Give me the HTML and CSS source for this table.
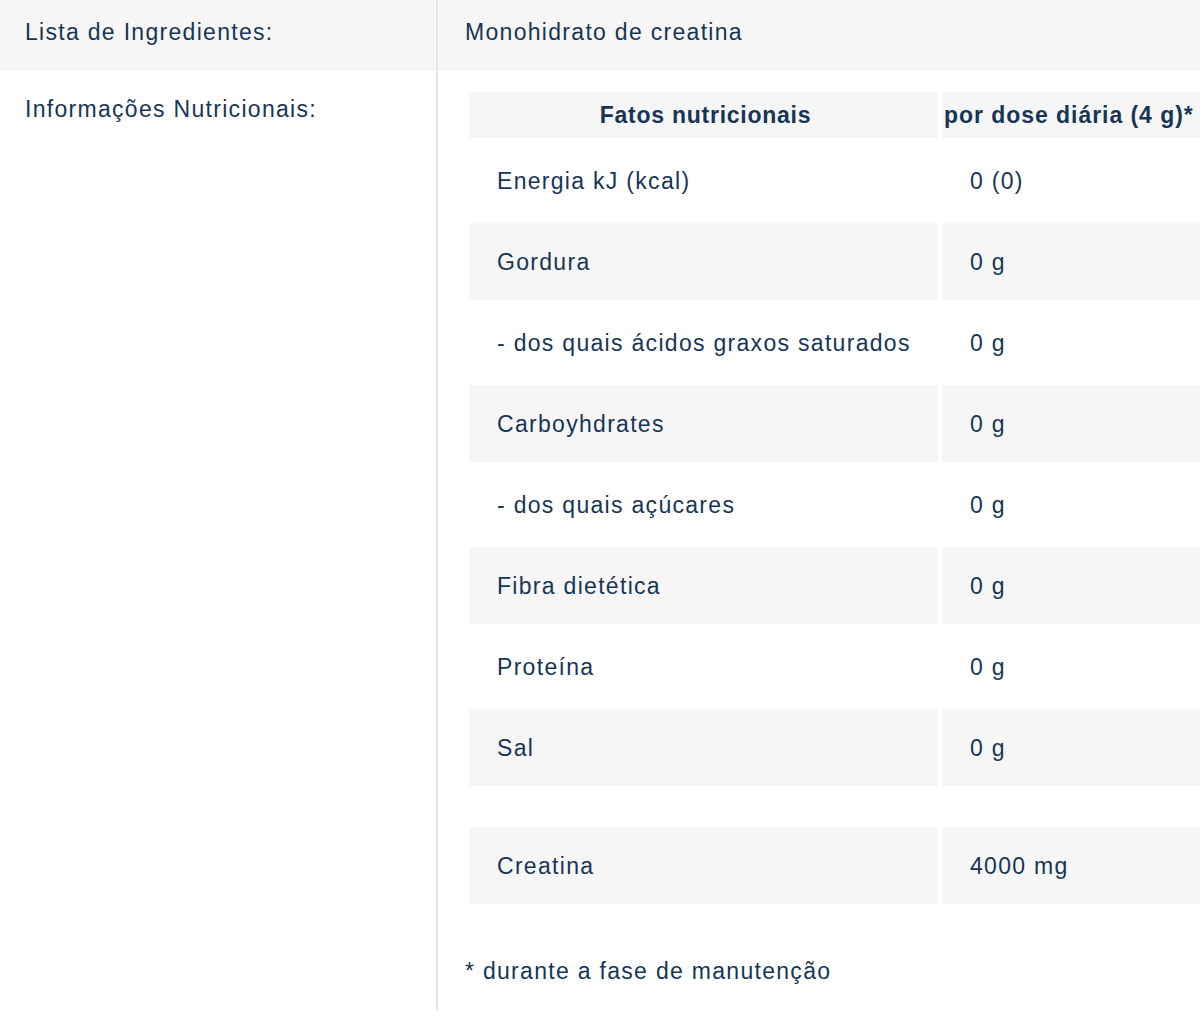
FILE: index.html
```html
<!DOCTYPE html>
<html lang="pt">
<head>
<meta charset="utf-8">
<title>Especificações</title>
<link rel="stylesheet" href="styles.css">
</head>
<body>
<div class="specs">
  <div class="spec-row spec-row--shaded">
    <div class="spec-label">Lista de Ingredientes:</div>
    <div class="spec-value">Monohidrato de creatina</div>
  </div>
  <div class="spec-row">
    <div class="spec-label spec-label--tall">Informações Nutricionais:</div>
    <div class="spec-value spec-value--table">
      <table class="nutri">
        <colgroup><col class="nutri-col-name"><col class="nutri-col-val"></colgroup>
        <thead>
          <tr><th>Fatos nutricionais</th><th>por dose diária (4 g)*</th></tr>
        </thead>
        <tbody>
          <tr><td>Energia kJ (kcal)</td><td>0 (0)</td></tr>
          <tr class="shaded"><td>Gordura</td><td>0 g</td></tr>
          <tr><td>- dos quais ácidos graxos saturados</td><td>0 g</td></tr>
          <tr class="shaded"><td>Carboyhdrates</td><td>0 g</td></tr>
          <tr><td>- dos quais açúcares</td><td>0 g</td></tr>
          <tr class="shaded"><td>Fibra dietética</td><td>0 g</td></tr>
          <tr><td>Proteína</td><td>0 g</td></tr>
          <tr class="shaded"><td>Sal</td><td>0 g</td></tr>
          <tr class="spacer"><td></td><td></td></tr>
          <tr class="shaded"><td>Creatina</td><td>4000 mg</td></tr>
        </tbody>
      </table>
      <p class="footnote">* durante a fase de manutenção</p>
    </div>
  </div>
</div>
</body>
</html>
```
FILE: styles.css
```css
html, body {
  margin: 0;
  padding: 0;
  overflow: hidden;
  background: #ffffff;
}

body {
  font-family: "Liberation Sans", Arial, sans-serif;
  font-size: 23px;
  line-height: 36px;
  letter-spacing: 1.3px;
  color: #173657;
}

.spec-row {
  display: grid;
  grid-template-columns: 438px 1fr;
}

.spec-row--shaded {
  background: #f6f6f6;
}

.spec-label {
  padding: 14px 25px 21px;
  border-right: 2px solid #e2e7ed;
}

.spec-label--tall {
  padding-top: 20px;
}

.spec-value {
  padding: 14px 0 21px 27px;
}

.spec-value--table {
  padding-top: 17px;
  padding-bottom: 22px;
}

.nutri {
  width: 739px;
  table-layout: fixed;
  border-collapse: separate;
  border-spacing: 4px;
}

.nutri-col-name { width: 469px; }
.nutri-col-val { width: 258px; }

.nutri th {
  height: 46px;
  padding: 0 0 0 4px;
  background: #f6f6f6;
  font-weight: bold;
  letter-spacing: 0.75px;
  text-align: center;
  vertical-align: middle;
  white-space: nowrap;
}

.nutri th + th {
  padding: 0 0 0 2px;
  letter-spacing: 0.95px;
  text-align: left;
}

.nutri td {
  height: 77px;
  padding: 0 0 0 28px;
  vertical-align: middle;
  white-space: nowrap;
}

.nutri tr.shaded td {
  background: #f6f6f6;
}

.nutri tr.spacer td {
  height: 33px;
  padding: 0;
  line-height: 0;
}

.footnote {
  margin: 45px 0 0;
}
```
